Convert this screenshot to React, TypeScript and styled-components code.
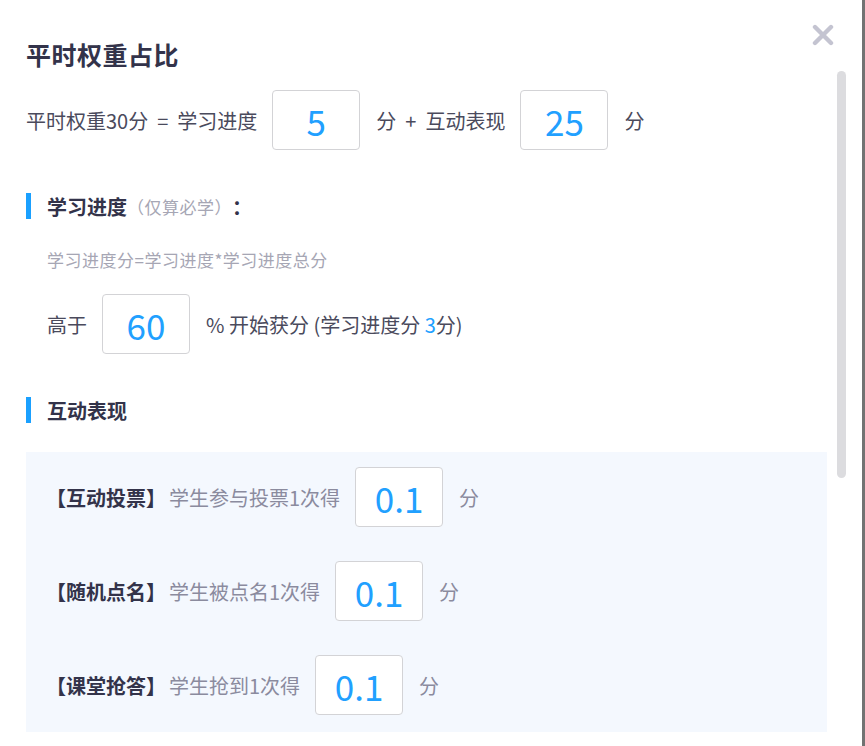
import React from "react";
import styled, { createGlobalStyle } from "styled-components";

const FONT = `"Noto Sans CJK SC", "Noto Sans", sans-serif`;

const GlobalStyle = createGlobalStyle`
  html, body {
    margin: 0;
    padding: 0;
    background: #fff;
  }
  body {
    font-family: ${FONT};
  }
`;

const interactions = [
  { label: "【互动投票】", desc: "学生参与投票1次得", value: "0.1" },
  { label: "【随机点名】", desc: "学生被点名1次得", value: "0.1" },
  { label: "【课堂抢答】", desc: "学生抢到1次得", value: "0.1" },
];

function CloseIcon() {
  return (
    <svg width="22" height="22" viewBox="0 0 22 22">
      <path
        d="M3 3 L19 19 M19 3 L3 19"
        stroke="#c4c4d1"
        strokeWidth="4.4"
        strokeLinecap="round"
        fill="none"
      />
    </svg>
  );
}

export default function App() {
  return (
    <>
      <GlobalStyle />
      <Page>
        <Header>
          <Title>平时权重占比</Title>
          <CloseButton aria-label="关闭">
            <CloseIcon />
          </CloseButton>
        </Header>
        <Body>
          <Content>
            <Line>
              平时权重30分<Op>=</Op>学习进度
              <ScoreBox defaultValue="5" />
              分<Op>+</Op>互动表现
              <ScoreBox defaultValue="25" />分
            </Line>

            <SectionTitle $top={43}>
              学习进度<Hint>（仅算必学）</Hint>：
            </SectionTitle>
            <Formula>学习进度分=学习进度*学习进度总分</Formula>
            <Line $indent={21} $top={23}>
              高于
              <ScoreBox defaultValue="60" />
              % 开始获分 (学习进度分 <Accent>3</Accent>分)
            </Line>

            <SectionTitle $top={43}>互动表现</SectionTitle>
            <Panel>
              {interactions.map((item) => (
                <PanelRow key={item.label}>
                  <RowLabel>{item.label}</RowLabel>
                  <RowDesc $gap={3}>{item.desc}</RowDesc>
                  <ScoreBox defaultValue={item.value} />
                  <RowDesc>分</RowDesc>
                </PanelRow>
              ))}
            </Panel>
          </Content>
          <ScrollTrack>
            <ScrollThumb />
          </ScrollTrack>
        </Body>
      </Page>
    </>
  );
}

const Page = styled.div`
  box-sizing: border-box;
  width: 865px;
  height: 746px;
  overflow: hidden;
  background: #fff;
  border-right: 3px solid #727272;
  display: flex;
  flex-direction: column;
`;

const Header = styled.div`
  display: flex;
  justify-content: space-between;
  align-items: flex-start;
  padding: 0 28px 0 26px;
  height: 68px;
`;

const Title = styled.h1`
  margin: 40px 0 0;
  font-size: 25px;
  line-height: 28px;
  font-weight: 700;
  color: #33334a;
  letter-spacing: 0.5px;
`;

const CloseButton = styled.button`
  margin-top: 24px;
  padding: 0;
  border: none;
  background: none;
  width: 22px;
  height: 22px;
  cursor: pointer;
  display: flex;
`;

const Body = styled.div`
  display: flex;
  padding-left: 26px;
  padding-right: 16px;
  flex: 1;
  min-height: 0;
`;

const Content = styled.div`
  flex: 1;
  display: flex;
  flex-direction: column;
`;

const ScrollTrack = styled.div`
  width: 9px;
  margin-left: 10px;
  padding-top: 3px;
`;

const ScrollThumb = styled.div`
  width: 9px;
  height: 407px;
  border-radius: 5px;
  background: #dcdcdf;
`;

const Line = styled.div<{ $indent?: number; $top?: number }>`
  display: flex;
  align-items: center;
  height: 60px;
  margin-top: ${(p) => p.$top ?? 22}px;
  padding-left: ${(p) => p.$indent ?? 0}px;
  font-size: 20px;
  color: #4a4a5c;
  white-space: pre;
`;

const Op = styled.span`
  margin: 0 9px;
`;

const Accent = styled.span`
  color: #21a0ff;
`;

const ScoreBox = styled.input.attrs({ type: "text" })`
  box-sizing: border-box;
  width: 88px;
  height: 60px;
  margin: 0 16px 0 15px;
  border: 1.5px solid #d3d3d6;
  border-radius: 4px;
  background: #fff;
  text-align: center;
  font-family: ${FONT};
  font-size: 35px;
  color: #21a0ff;
  padding: 0;
  outline: none;
`;

const SectionTitle = styled.div<{ $top: number }>`
  display: flex;
  align-items: center;
  height: 26px;
  margin-top: ${(p) => p.$top}px;
  font-size: 20px;
  font-weight: 700;
  color: #33334a;

  &::before {
    content: "";
    width: 5px;
    height: 26px;
    margin-right: 16px;
    background: #1aa0ff;
  }
`;

const Hint = styled.span`
  font-size: 17px;
  letter-spacing: 0.5px;
  font-weight: 400;
  color: #a6a6b4;
`;

const Formula = styled.div`
  margin-top: 30px;
  padding-left: 21px;
  font-size: 17px;
  line-height: 22px;
  letter-spacing: 0.5px;
  color: #a6a6b4;
`;

const Panel = styled.div`
  margin-top: 29px;
  padding: 15px 20px 17px;
  background: #f4f8fe;
  display: flex;
  flex-direction: column;
  gap: 34px;
`;

const PanelRow = styled.div`
  display: flex;
  align-items: center;
  height: 60px;
  font-size: 20px;
`;

const RowLabel = styled.span`
  font-weight: 700;
  color: #33334a;
`;

const RowDesc = styled.span<{ $gap?: number }>`
  margin-left: ${(p) => p.$gap ?? 0}px;
  color: #8b8b9e;
`;
